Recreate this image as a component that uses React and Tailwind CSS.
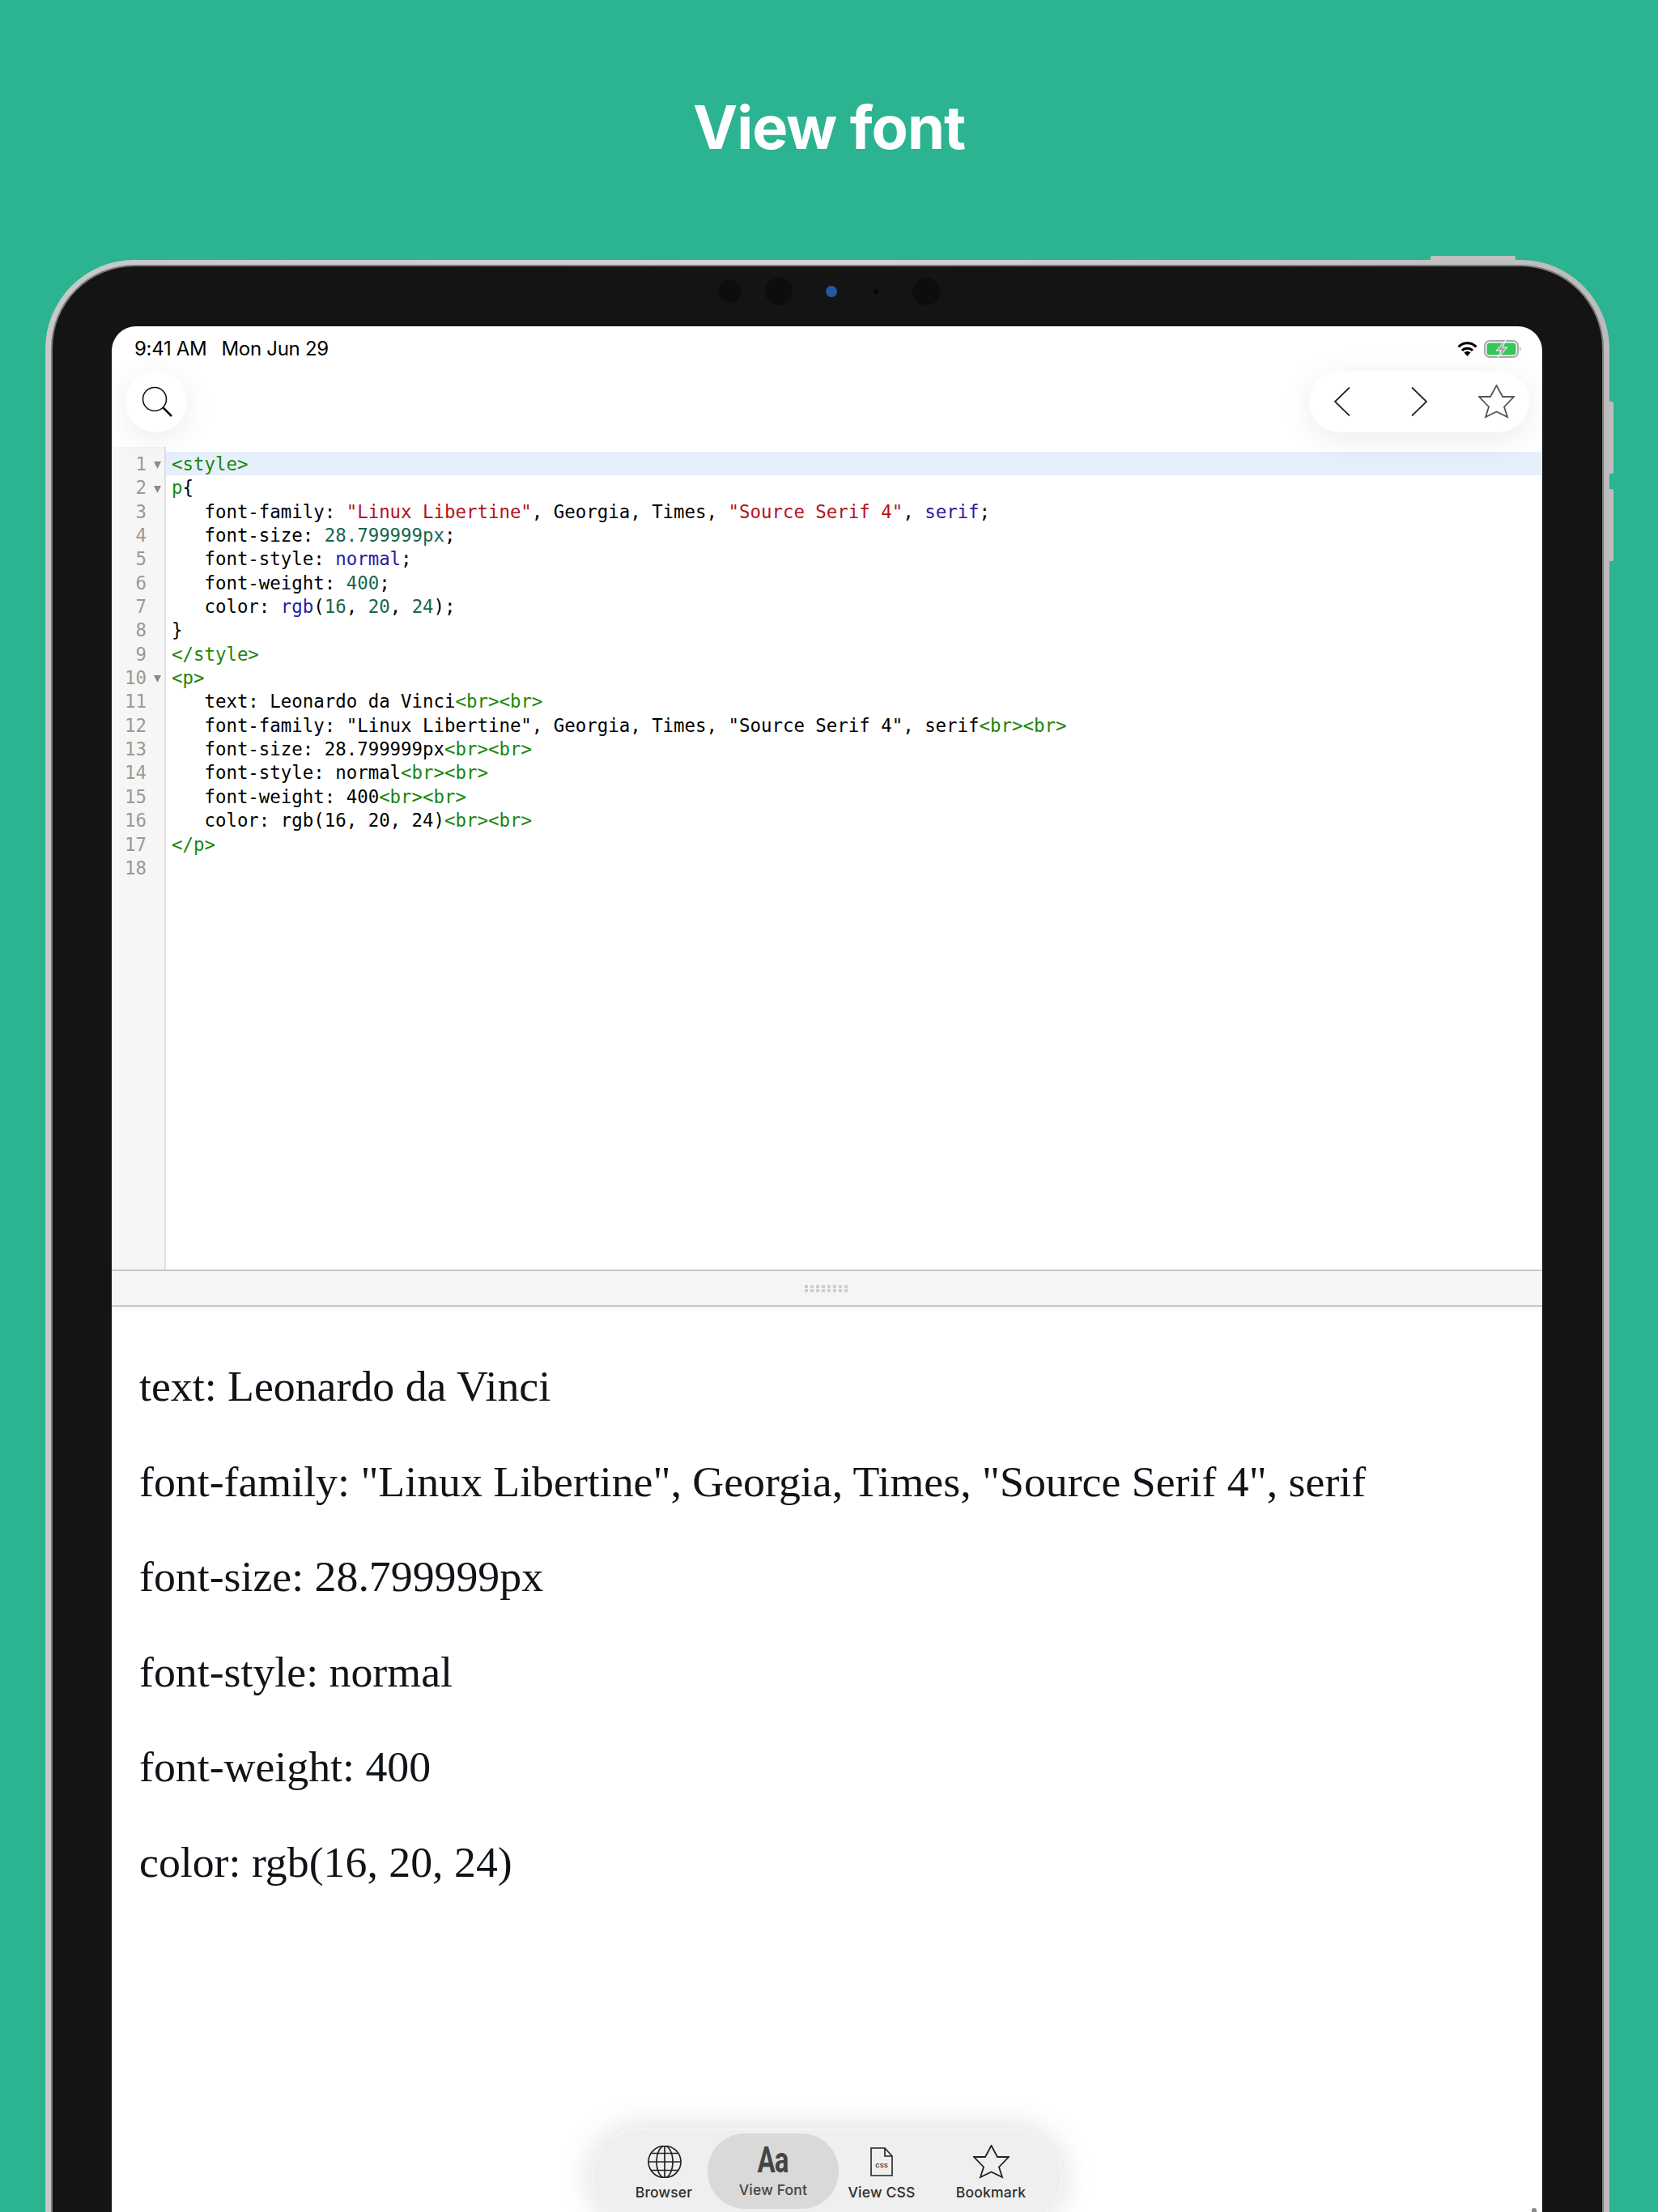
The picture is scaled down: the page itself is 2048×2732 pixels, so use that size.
const tag = 'text-[#1a860c]';
const str = 'text-[#b5121b]';
const num = 'text-[#17674d]';
const atom = 'text-[#2a1aa5]';

const codeLines = [
  [[tag, '<style>']],
  [[tag, 'p'], ['', '{']],
  [['', '   font-family: '], [str, '"Linux Libertine"'], ['', ', Georgia, Times, '], [str, '"Source Serif 4"'], ['', ', '], [atom, 'serif'], ['', ';']],
  [['', '   font-size: '], [num, '28.799999px'], ['', ';']],
  [['', '   font-style: '], [atom, 'normal'], ['', ';']],
  [['', '   font-weight: '], [num, '400'], ['', ';']],
  [['', '   color: '], [atom, 'rgb'], ['', '('], [num, '16'], ['', ', '], [num, '20'], ['', ', '], [num, '24'], ['', ');']],
  [['', '}']],
  [[tag, '</style>']],
  [[tag, '<p>']],
  [['', '   text: Leonardo da Vinci'], [tag, '<br><br>']],
  [['', '   font-family: "Linux Libertine", Georgia, Times, "Source Serif 4", serif'], [tag, '<br><br>']],
  [['', '   font-size: 28.799999px'], [tag, '<br><br>']],
  [['', '   font-style: normal'], [tag, '<br><br>']],
  [['', '   font-weight: 400'], [tag, '<br><br>']],
  [['', '   color: rgb(16, 20, 24)'], [tag, '<br><br>']],
  [[tag, '</p>']],
  [],
];

const foldable = [1, 2, 10];

const preview = [
  'text: Leonardo da Vinci',
  'font-family: "Linux Libertine", Georgia, Times, "Source Serif 4", serif',
  'font-size: 28.799999px',
  'font-style: normal',
  'font-weight: 400',
  'color: rgb(16, 20, 24)',
];

const Star = ({ className, stroke = '#555' }) => (
  <svg viewBox="-1 -1 45 42" className={className} fill="none" stroke={stroke} strokeWidth="1.8" strokeLinejoin="miter">
    <path d="M21.5 0 L29 14 L43 14 L31 26.5 L35 39 L21.5 32.5 L8 39 L12 26.5 L0 14 L14 14 Z" />
  </svg>
);

function StatusBar() {
  return (
    <div className="h-[55px] pl-[28px] pr-[25px] flex items-center justify-between text-black font-['Inter'] text-[24px] shrink-0">
      <div className="flex gap-[18px] mt-[1px] tracking-[-0.3px]">
        <span>9:41 AM</span>
        <span>Mon Jun 29</span>
      </div>
      <div className="flex items-center gap-[8px]">
        <svg viewBox="0 0 25 18" className="w-[25px] h-[18px]" fill="none" stroke="#000" strokeWidth="3">
          <path d="M1.5 6.5 A15 15 0 0 1 23.5 6.5" />
          <path d="M6 11 A9 9 0 0 1 19 11" />
          <path d="M12.5 18 L8.5 13.5 A5.5 5.5 0 0 1 16.5 13.5 Z" fill="#000" stroke="none" />
        </svg>
        <svg viewBox="0 0 47 22" className="w-[47px] h-[22px]">
          <rect x="1" y="1" width="41" height="20" rx="6" fill="none" stroke="#a8a8a8" strokeWidth="2" />
          <rect x="3.5" y="3.5" width="36" height="15" rx="3.5" fill="#34c759" />
          <path d="M44 8 Q47 11 44 14 Z" fill="#a8a8a8" />
          <path d="M27 0 L15 13 L21 13 L17 22 L29 9 L23 9 Z" fill="#a8a8a8" stroke="#fff" strokeWidth="1" />
        </svg>
      </div>
    </div>
  );
}

function TopBar() {
  return (
    <div className="h-[94px] pl-[17px] pr-[16px] flex items-start justify-between shrink-0 relative z-10">
      <button className="w-[76px] h-[76px] rounded-full bg-white shadow-[0_8px_40px_rgba(0,0,0,0.08)] flex items-center justify-center">
        <svg viewBox="0 0 40 40" className="w-[40px] h-[40px]" fill="none" stroke="#111">
          <circle cx="18" cy="17" r="14.5" strokeWidth="1.6" />
          <path d="M28.5 27.5 L39 38" strokeWidth="2.6" />
        </svg>
      </button>
      <div className="w-[272px] h-[76px] rounded-[38px] bg-white shadow-[0_8px_40px_rgba(0,0,0,0.08)] flex items-center pl-[31px]">
        <svg viewBox="0 0 20 36" className="w-[20px] h-[36px]" fill="none" stroke="#222" strokeWidth="1.8">
          <path d="M19 0.5 L1 18 L19 35.5" />
        </svg>
        <svg viewBox="0 0 20 36" className="w-[20px] h-[36px] ml-[75px]" fill="none" stroke="#222" strokeWidth="1.8">
          <path d="M1 0.5 L19 18 L1 35.5" />
        </svg>
        <Star className="w-[45px] h-[42px] ml-[63px]" />
      </div>
    </div>
  );
}

function CodeEditor() {
  return (
    <div className="h-[1016px] flex shrink-0 font-['DejaVu_Sans_Mono'] text-[22.4px] leading-[29.35px]">
      <div className="w-[67px] shrink-0 bg-[#f6f6f6] border-r-2 border-[#e0e0e0] pt-[7px] text-[#999]">
        {codeLines.map((_, i) => (
          <div key={i} className="h-[29.35px] flex items-center">
            <span className="w-[43px] text-right">{i + 1}</span>
            {foldable.includes(i + 1) && (
              <svg viewBox="0 0 9 9" className="w-[9px] h-[9px] ml-[9px] mt-[2px]"><path d="M0 0 H9 L4.5 9 Z" fill="#8a8a8a" /></svg>
            )}
          </div>
        ))}
      </div>
      <div className="flex-1 pt-[6px] text-black">
        {codeLines.map((tokens, i) => (
          <div key={i} className={`h-[29.35px] pl-[7px] whitespace-pre ${i === 0 ? 'bg-[#e6f0fc]' : ''}`}>
            <span className="relative top-[1px]">
              {tokens.map(([color, text], j) => <span key={j} className={color}>{text}</span>)}
            </span>
          </div>
        ))}
      </div>
    </div>
  );
}

function Splitter() {
  return (
    <div className="h-[46px] shrink-0 bg-[#f5f5f5] border-y-2 border-[#c8c8c8] flex items-center justify-center shadow-[0_2px_6px_rgba(0,0,0,0.06)]">
      <div className="grid grid-cols-8 gap-x-[3px] gap-y-[1px] mr-[2px]">
        {Array.from({ length: 16 }).map((_, i) => <span key={i} className="w-[4px] h-[4px] bg-[#cfcfcf]" />)}
      </div>
    </div>
  );
}

function Toolbar() {
  return (
    <div className="absolute left-[593px] top-[2226px] w-[581px] h-[120px] rounded-[60px] bg-[#efefef] border border-[#fafafa] shadow-[0_0_40px_rgba(0,0,0,0.15)] flex font-['Inter'] text-[17.5px] font-medium text-[#2e2e2e] tracking-[0.2px]">
      <div className="w-[142px] pt-[20px] pl-[34px] flex flex-col items-center">
        <svg viewBox="0 0 42 40" className="w-[42px] h-[40px] ml-[2px]" fill="none" stroke="#222" strokeWidth="1.7">
          <ellipse cx="21" cy="20" rx="20" ry="19.5" />
          <ellipse cx="21" cy="20" rx="10" ry="19.5" />
          <path d="M21 0.5 V39.5 M1 20 H41 M4.5 9.5 H37.5 M4.5 30.5 H37.5" />
        </svg>
        <span className="mt-[7px] leading-[22px]">Browser</span>
      </div>
      <div className="w-[162px] h-[93px] mt-[5px] rounded-[46px] bg-[#d9d9d9] flex flex-col items-center text-[#444]">
        <span className="h-[46px] mt-[10px] text-[44px] leading-[46px] font-bold font-['Roboto'] tracking-[-1px] scale-x-[0.75] text-[#444]">Aa</span>
        <span className="mt-[3px] leading-[22px]">View Font</span>
      </div>
      <div className="w-[106px] pt-[22px] flex flex-col items-center">
        <svg viewBox="0 0 28 36" className="w-[28px] h-[36px]" fill="none" stroke="#222" strokeWidth="1.6">
          <path d="M1 1 H18 L27 11 V35 H1 Z M18 1 V11 H27" />
          <text x="14" y="25" textAnchor="middle" fontSize="8" fill="#222" stroke="none" fontFamily="Roboto">CSS</text>
        </svg>
        <span className="mt-[9px] leading-[22px]">View CSS</span>
      </div>
      <div className="flex-1 pt-[19px] pr-[5px] flex flex-col items-center">
        <Star className="w-[45px] h-[42px]" stroke="#222" />
        <span className="mt-[6px] leading-[22px]">Bookmark</span>
      </div>
    </div>
  );
}

export default function App() {
  return (
    <div className="w-[2048px] h-[2732px] overflow-hidden bg-[#2cb391] flex flex-col">
      <div className="h-[321px] shrink-0 pt-[113px] text-center">
        <h1 className="text-[74px] leading-[88px] font-bold text-white font-['Inter'] tracking-[-1px]">View font</h1>
      </div>
      <div className="relative ml-[56px] w-[1932px] grow rounded-t-[110px] bg-gradient-to-r from-[#c8c8c8] via-[#d4d4d4] to-[#bcbcbc] pt-[8px] px-[9px]">
        <span className="absolute -top-[5px] left-[1711px] w-[105px] h-[6px] bg-[#c0c0c0] rounded-t-[2px]" />
        <span className="absolute top-[175px] -right-[5px] w-[5px] h-[89px] bg-[#bdbdbd] rounded-r-[2px]" />
        <span className="absolute top-[283px] -right-[5px] w-[5px] h-[89px] bg-[#bdbdbd] rounded-r-[2px]" />
        <div className="relative h-full rounded-t-[101px] bg-[#141414] shadow-[0_0_0_2px_#7c7c7c] pt-[74px] pl-[73px] pr-[75px]">
          <div className="absolute top-[14px] left-0 w-full h-[34px]">
            <span className="absolute left-[822px] top-[3px] w-[28px] h-[28px] rounded-full bg-[#0d0d0d]" />
            <span className="absolute left-[880px] top-0 w-[34px] h-[34px] rounded-full bg-[#0d0d0d]" />
            <span className="absolute left-[955px] top-[10px] w-[14px] h-[14px] rounded-full bg-[#1f5c9e]" />
            <span className="absolute left-[1014px] top-[14px] w-[6px] h-[6px] rounded-full bg-[#070707]" />
            <span className="absolute left-[1062px] top-0 w-[34px] h-[34px] rounded-full bg-[#0d0d0d]" />
          </div>
          <div className="relative h-full w-[1767px] rounded-t-[30px] bg-white flex flex-col overflow-hidden">
            <StatusBar />
            <TopBar />
            <CodeEditor />
            <Splitter />
            <div className="pt-[40px] pl-[34px] font-['Liberation_Serif'] text-[53.8px] leading-[117.5px] text-[#101418]">
              {preview.map(line => <p key={line}>{line}</p>)}
            </div>
            <Toolbar />
            <span className="absolute right-[7px] top-[2324px] w-[6px] h-[10px] rounded-t-full bg-[#8a8a8a]" />
          </div>
        </div>
      </div>
    </div>
  );
}
